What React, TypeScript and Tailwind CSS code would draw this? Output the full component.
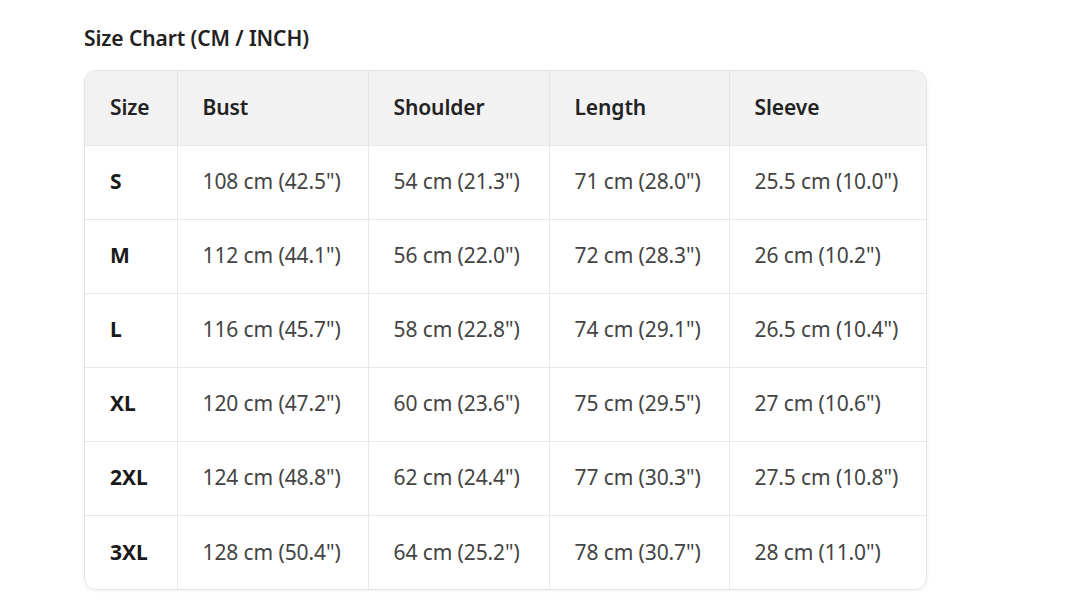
const rows: [string, string, string, string, string][] = [
  ['S', '108 cm (42.5")', '54 cm (21.3")', '71 cm (28.0")', '25.5 cm (10.0")'],
  ['M', '112 cm (44.1")', '56 cm (22.0")', '72 cm (28.3")', '26 cm (10.2")'],
  ['L', '116 cm (45.7")', '58 cm (22.8")', '74 cm (29.1")', '26.5 cm (10.4")'],
  ['XL', '120 cm (47.2")', '60 cm (23.6")', '75 cm (29.5")', '27 cm (10.6")'],
  ['2XL', '124 cm (48.8")', '62 cm (24.4")', '77 cm (30.3")', '27.5 cm (10.8")'],
  ['3XL', '128 cm (50.4")', '64 cm (25.2")', '78 cm (30.7")', '28 cm (11.0")'],
];

const headers = ['Size', 'Bust', 'Shoulder', 'Length', 'Sleeve'];
const widths = ['w-[92px]', 'w-[191px]', 'w-[181px]', 'w-[180px]', 'w-[199px]'];

export default function App() {
  return (
    <div className="min-h-screen bg-white pl-[84px] pt-[24px] font-['Noto_Sans',sans-serif]">
      <h2 className="text-[21px] font-semibold leading-[28px] text-[#222] tracking-[-0.1px]">Size Chart (CM / INCH)</h2>
      <div className="mt-[18px] w-[843px] overflow-hidden rounded-[12px] border border-[#e4e4e4] shadow-[0_1px_4px_rgba(0,0,0,0.06)]">
        <table className="w-full table-fixed border-collapse text-[21px] tracking-[-0.1px]">
          <colgroup>
            {widths.map((w, i) => (
              <col key={i} className={w} />
            ))}
          </colgroup>
          <thead>
            <tr className="h-[74px] bg-[#f2f2f2]">
              {headers.map((h, i) => (
                <th
                  key={h}
                  className={`px-[25px] text-left font-semibold text-[#222] ${i > 0 ? 'border-l border-[#e4e4e4]' : ''}`}
                >
                  {h}
                </th>
              ))}
            </tr>
          </thead>
          <tbody>
            {rows.map((r) => (
              <tr key={r[0]} className="h-[74px] border-t border-[#e8e8e8]">
                {r.map((c, i) => (
                  <td
                    key={i}
                    className={
                      i === 0
                        ? 'px-[25px] font-bold text-[#1a1a1a]'
                        : 'border-l border-[#e8e8e8] px-[25px] text-[#444]'
                    }
                  >
                    {c}
                  </td>
                ))}
              </tr>
            ))}
          </tbody>
        </table>
      </div>
    </div>
  );
}
